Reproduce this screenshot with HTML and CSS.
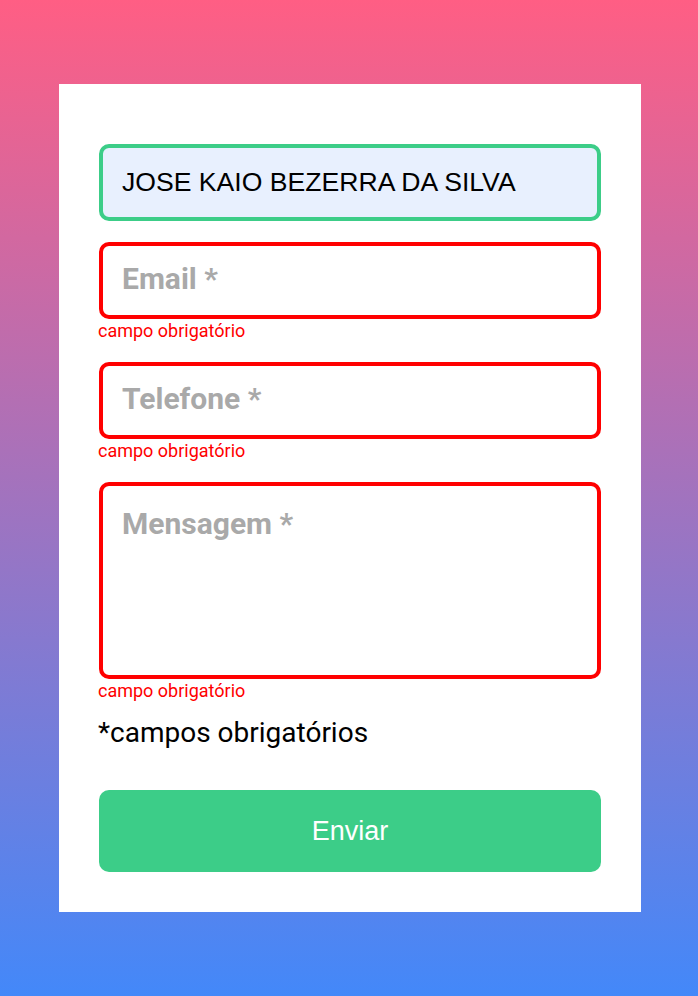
FILE: index.html
```html
<!DOCTYPE html>
<html lang="pt-BR">
<head>
<meta charset="utf-8">
<title>Contato</title>
<link rel="stylesheet" href="styles.css">
</head>
<body>
<main class="page">
  <form class="card">
    <div class="field">
      <input class="input input-ok" type="text" value="JOSE KAIO BEZERRA DA SILVA">
    </div>
    <div class="field">
      <input class="input input-error" type="text" placeholder="Email *">
      <span class="error">campo obrigatório</span>
    </div>
    <div class="field">
      <input class="input input-error" type="text" placeholder="Telefone *">
      <span class="error">campo obrigatório</span>
    </div>
    <div class="field">
      <textarea class="input textarea input-error" placeholder="Mensagem *"></textarea>
      <span class="error">campo obrigatório</span>
    </div>
    <p class="note">*campos obrigatórios</p>
    <button class="submit" type="button">Enviar</button>
  </form>
</main>
</body>
</html>
```

FILE: styles.css
```css
* { box-sizing: border-box; }

html, body {
  margin: 0;
  padding: 0;
}

body {
  min-height: 996px;
  background: linear-gradient(to bottom, #ff5e84 0%, #4388f9 100%);
  font-family: "Roboto", "Liberation Sans", sans-serif;
}

.page {
  padding: 84px 57px 84px 59px;
}

.card {
  width: 582px;
  background: #ffffff;
  padding: 60px 40px 40px 40px;
  display: flex;
  flex-direction: column;
}

.field {
  display: flex;
  flex-direction: column;
  margin-bottom: 21px;
}

.input {
  width: 502px;
  height: 77px;
  border: 4px solid #3ccd88;
  border-radius: 10px;
  padding: 0 19px;
  font-family: "Liberation Sans", Arial, sans-serif;
  font-size: 26.6px;
  color: #000;
  background: #ffffff;
  outline: none;
  margin: 0;
}

.input-ok {
  background: #e8f0fe;
}

.input-error {
  border-color: #ff0000;
}

.input::placeholder {
  font-family: "Roboto", sans-serif;
  font-weight: 700;
  font-size: 30px;
  color: #a9a9a9;
  opacity: 1;
}

.textarea {
  height: 197px;
  padding: 20px 19px;
  resize: none;
  display: block;
}

.error {
  color: #ff0000;
  font-family: "Roboto", sans-serif;
  font-size: 18px;
  line-height: 21px;
  margin-top: 1px;
  margin-left: -1px;
}

.field:last-of-type {
  margin-bottom: 0;
}

.note {
  margin: 15px 0 0 -1px;
  font-family: "Roboto", sans-serif;
  font-size: 28px;
  line-height: 33px;
  color: #000;
}

.submit {
  margin-top: 41px;
  width: 502px;
  height: 82px;
  border: none;
  border-radius: 10px;
  background: #3ccd88;
  color: #ffffff;
  font-family: "Liberation Sans", Arial, sans-serif;
  font-size: 27px;
  cursor: pointer;
}
```
